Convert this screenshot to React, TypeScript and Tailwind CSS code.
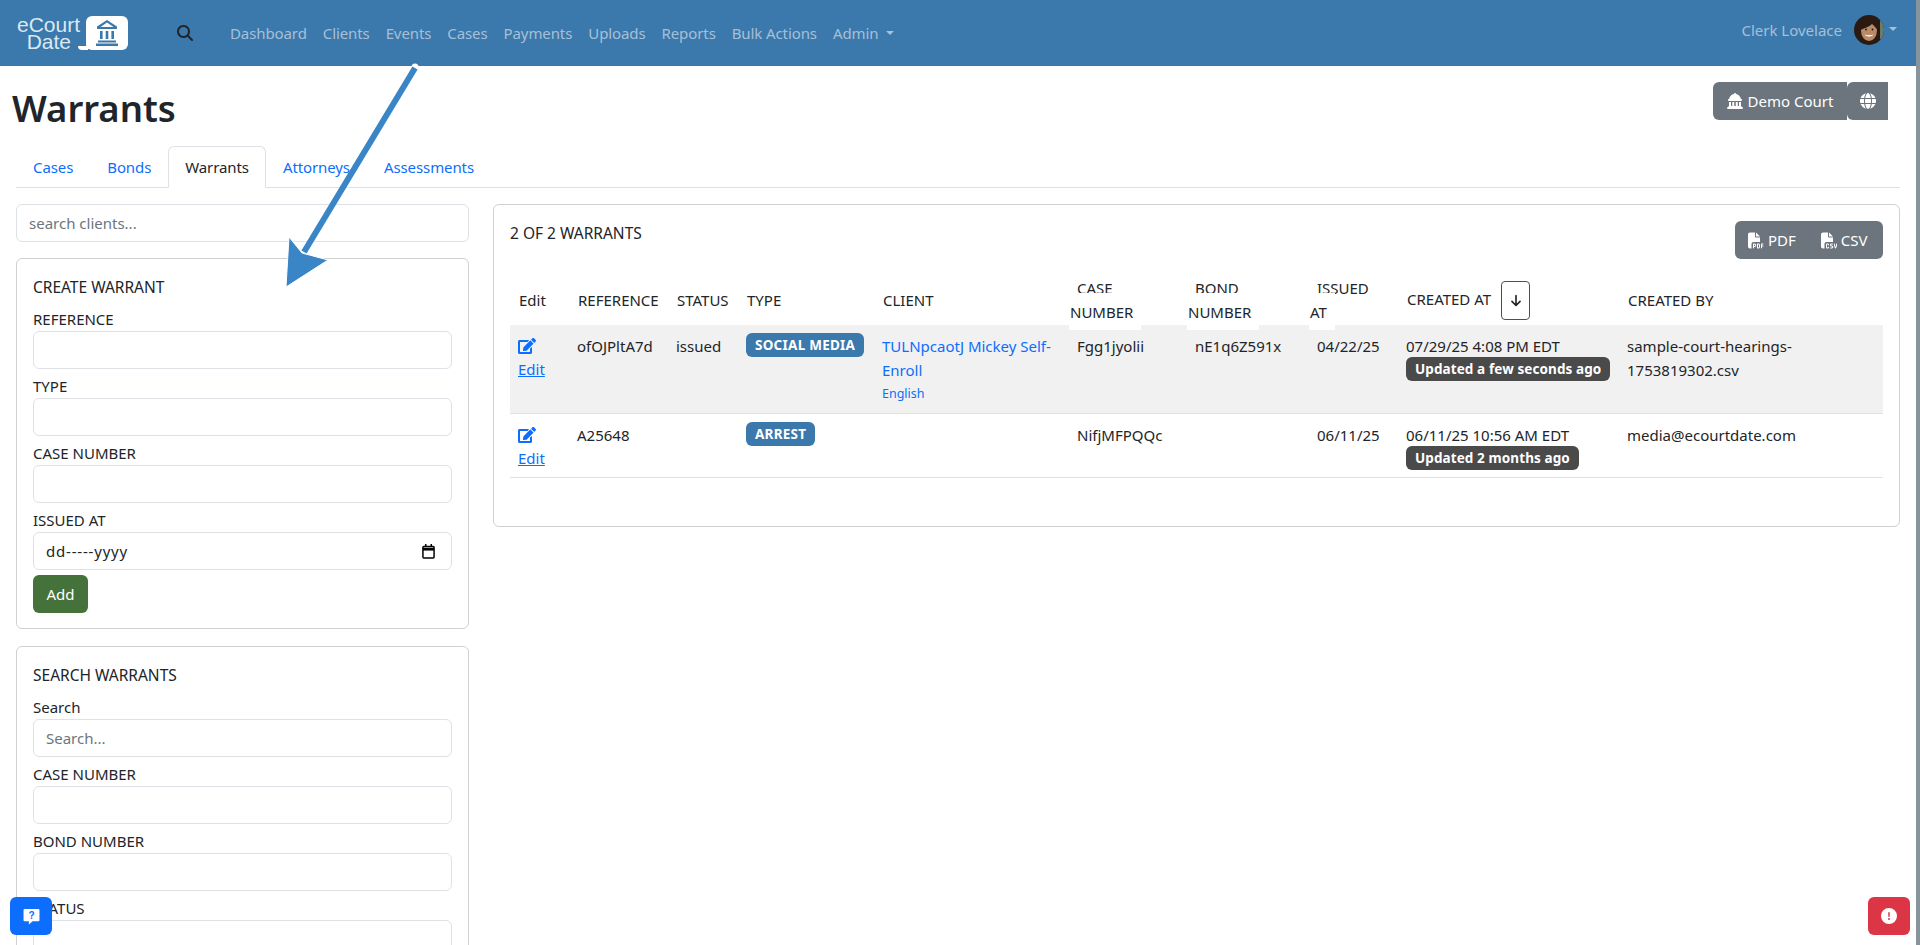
import React from "react";
import { FaEdit } from "react-icons/fa";
import { FaMagnifyingGlass, FaLandmarkDome, FaGlobe, FaFilePdf, FaFileCsv, FaCircleExclamation, FaArrowDown } from "react-icons/fa6";

const NAV = ["Dashboard", "Clients", "Events", "Cases", "Payments", "Uploads", "Reports", "Bulk Actions"];
const TABS = ["Cases", "Bonds", "Warrants", "Attorneys", "Assessments"];

function Caret() {
  return <span className="inline-block w-0 h-0 border-x-[4px] border-x-transparent border-t-[4px] border-t-current" />;
}

function Field({ label, placeholder }: { label: string; placeholder?: string }) {
  return (
    <div className="mb-[5px]">
      <div className="h-[24px] leading-[24px]">{label}</div>
      <input
        placeholder={placeholder}
        className="block w-full h-[38px] px-[12px] rounded-[6px] border border-[#dee2e6] bg-white placeholder:text-[#6c757d] outline-none"
      />
    </div>
  );
}

function Stacked({ a, b }: { a: string; b: string }) {
  return (
    <th className="p-0 font-normal text-left align-top">
      <div className="pl-[8px] h-[24px] leading-[24px]">{a}</div>
      <div className="relative z-10 -mt-[7px] -mb-[5px] w-fit bg-white pl-[1px] pr-[8px] pt-[7px] pb-[6px] leading-[24px]">{b}</div>
    </th>
  );
}

function Plain({ children }: { children: React.ReactNode }) {
  return <th className="p-0 pl-[9px] font-normal text-left align-middle">{children}</th>;
}

function EditCell() {
  return (
    <td className="align-top px-[8px] pt-[9px] pb-[7px]">
      <div className="h-[24px] flex items-center text-[#0d6efd]"><FaEdit className="w-[18px] h-[16px]" /></div>
      <a className="block h-[24px] -mt-[1px] leading-[24px] text-[#0d6efd] underline">Edit</a>
    </td>
  );
}

function Cell({ children }: { children?: React.ReactNode }) {
  return <td className="align-top px-[8px] pt-[9px] pb-[7px] leading-[24px]">{children}</td>;
}

function Badge({ bg, children }: { bg: string; children: React.ReactNode }) {
  return (
    <span className={`block w-fit h-[24px] leading-[24px] px-[9px] rounded-[6px] text-white text-[13.5px] font-bold whitespace-nowrap ${bg}`}>
      {children}
    </span>
  );
}

function Avatar() {
  return (
    <svg viewBox="0 0 30 30" className="w-[30px] h-[30px] rounded-full">
      <rect width="30" height="30" fill="#2a1a11" />
      <rect x="26" y="4" width="4" height="20" fill="#6d7a6a" />
      <ellipse cx="15" cy="15.500" rx="8" ry="10.500" fill="#b98a68" />
      <path d="M6.500 15C6.500 7 11 4.500 15 4.500c5 0 8.500 3 8.500 10-2-2-4-4.500-5.500-5.500-2.500 2.500-7 4-11.500 6Z" fill="#2a1a11" />
      <path d="M10.500 19.500c2 2.800 7 2.800 9 0-3 .8-6 .8-9 0Z" fill="#f5eee6" />
      <circle cx="12" cy="14.500" r="0.900" fill="#23140c" />
      <circle cx="18.500" cy="14.500" r="0.900" fill="#23140c" />
    </svg>
  );
}

function Courthouse() {
  return (
    <svg viewBox="0 0 22 26" className="w-[22px] h-[26px]" fill="#3b78ab">
      <path d="M11 0 21 6.500V9H1V6.500L11 0Zm0 2.600L4.500 7h13L11 2.600Z" fillRule="evenodd" />
      <rect x="4" y="11" width="2.600" height="8" />
      <rect x="9.700" y="11" width="2.600" height="8" />
      <rect x="15.400" y="11" width="2.600" height="8" />
      <rect x="2" y="20.500" width="18" height="2" />
      <rect x="0" y="23.500" width="22" height="2.500" />
    </svg>
  );
}

function Logo() {
  return (
    <div className="flex items-center ml-[16px] w-[112px] h-[34px] text-[#dce8f2]">
      <div className="w-[64px] flex flex-col items-end text-[21px] leading-[17px] font-['Liberation_Sans',sans-serif]">
        <span>eCourt</span>
        <span className="pr-[9px]">Date</span>
      </div>
      <div className="relative ml-[6px] w-[42px] h-[34px] rounded-[6px] bg-white flex items-center justify-center">
        <Courthouse />
        <span className="absolute -left-[8px] bottom-0 w-[10px] h-[4px] bg-white rounded-bl-[6px]" />
      </div>
    </div>
  );
}

export default function App() {
  return (
    <div className="relative flex w-[1920px] h-[945px] overflow-hidden bg-white text-[#212529] text-[15px] font-['Noto_Sans','Open_Sans',sans-serif]">
      <div className="w-[1916px] shrink-0">
        <header className="h-[66px] bg-[#3b78ab] flex items-center text-[rgba(255,255,255,0.55)]">
          <Logo />
          <FaMagnifyingGlass className="ml-[49px] w-[16px] h-[16px] text-[#212529]" />
          <nav className="ml-[37px] flex items-center gap-[16px] tracking-[-0.1px]">
            {NAV.map((n) => (
              <a key={n} className="leading-[24px]">{n}</a>
            ))}
            <a className="flex items-center gap-[8px] leading-[24px]">Admin <Caret /></a>
          </nav>
          <div className="ml-auto mr-[19px] -mt-[6px] flex items-center">
            <span>Clerk Lovelace</span>
            <span className="ml-[12px]"><Avatar /></span>
            <span className="ml-[5px] -mt-[2px] flex"><Caret /></span>
          </div>
        </header>

        <div className="h-[80px] pl-[12px] pr-[28px] pt-[16px] flex justify-between items-start">
          <h1 className="text-[36.5px] leading-[52px] font-semibold">Warrants</h1>
          <div className="flex text-white">
            <div className="h-[38px] w-[134px] rounded-l-[6px] bg-[#6c757d] flex items-center justify-center gap-[5px]">
              <FaLandmarkDome className="w-[16px] h-[16px]" /> Demo Court
            </div>
            <div className="h-[38px] w-[41px] rounded-l-[6px] bg-[#6c757d] flex items-center justify-center">
              <FaGlobe className="w-[16px] h-[16px]" />
            </div>
          </div>
        </div>

        <div className="mx-[16px] h-[42px] border-b border-[#dee2e6] flex tracking-[-0.1px]">
          {TABS.map((t) =>
            t === "Warrants" ? (
              <a key={t} className="h-[42px] px-[16px] flex items-center bg-white border border-[#dee2e6] border-b-white rounded-t-[6px]">{t}</a>
            ) : (
              <a key={t} className="h-[42px] px-[17px] flex items-center text-[#0d6efd]">{t}</a>
            )
          )}
        </div>

        <div className="mt-[16px] mx-[16px] flex items-start gap-[24px]">
          <aside className="w-[453px] shrink-0">
            <input
              placeholder="search clients..."
              className="block w-full h-[38px] px-[12px] rounded-[6px] border border-[#dee2e6] placeholder:text-[#6c757d] outline-none mb-[16px]"
            />
            <section className="rounded-[6px] border border-[#ced1d4] px-[16px] pt-[16px] pb-[15px] mb-[17px]">
              <div className="h-[24px] leading-[24px] mb-[8px] text-[15.500px]">CREATE WARRANT</div>
              <Field label="REFERENCE" />
              <Field label="TYPE" />
              <Field label="CASE NUMBER" />
              <div className="mb-[5px]">
                <div className="h-[24px] leading-[24px]">ISSUED AT</div>
                <div className="h-[38px] px-[12px] rounded-[6px] border border-[#dee2e6] flex items-center justify-between">
                  <span className="tracking-[0.8px]">dd-----yyyy</span>
                  <svg viewBox="0 0 14 16" className="w-[13px] h-[15px] mr-[4px]" fill="none" stroke="#000" strokeWidth="1.600">
                    <rect x="1" y="2.500" width="12" height="12.500" rx="1" />
                    <path d="M1 5.500h12" strokeWidth="3" />
                    <path d="M4 0v3M10 0v3" />
                  </svg>
                </div>
              </div>
              <button className="h-[38px] w-[55px] rounded-[6px] bg-[#44723a] text-white">Add</button>
            </section>
            <section className="rounded-[6px] border border-[#ced1d4] px-[16px] pt-[16px] pb-[16px]">
              <div className="h-[24px] leading-[24px] mb-[8px] text-[15.500px]">SEARCH WARRANTS</div>
              <Field label="Search" placeholder="Search..." />
              <Field label="CASE NUMBER" />
              <Field label="BOND NUMBER" />
              <Field label="STATUS" />
            </section>
          </aside>

          <main className="flex-1 rounded-[6px] border border-[#ced1d4] px-[16px] pt-[16px] pb-[48px]">
            <div className="flex justify-between items-start mb-[17px]">
              <div className="h-[24px] leading-[24px] text-[15.500px]">2 OF 2 WARRANTS</div>
              <div className="h-[38px] w-[148px] rounded-[6px] bg-[#6c757d] text-white flex items-center gap-[25px] pl-[13px]">
                <span className="flex items-center gap-[4px]"><FaFilePdf className="w-[16px] h-[17px]" /> PDF</span>
                <span className="flex items-center gap-[4px]"><FaFileCsv className="w-[16px] h-[17px]" /> CSV</span>
              </div>
            </div>
            <table className="w-[1373px] table-fixed border-collapse">
              <colgroup>
                <col className="w-[59px]" />
                <col className="w-[99px]" />
                <col className="w-[70px]" />
                <col className="w-[136px]" />
                <col className="w-[195px]" />
                <col className="w-[118px]" />
                <col className="w-[122px]" />
                <col className="w-[89px]" />
                <col className="w-[221px]" />
                <col className="w-[264px]" />
              </colgroup>
              <thead>
                <tr className="h-[49px]">
                  <Plain>Edit</Plain>
                  <Plain>REFERENCE</Plain>
                  <Plain>STATUS</Plain>
                  <Plain>TYPE</Plain>
                  <Plain>CLIENT</Plain>
                  <Stacked a="CASE" b="NUMBER" />
                  <Stacked a="BOND" b="NUMBER" />
                  <Stacked a="ISSUED" b="AT" />
                  <th className="p-0 pl-[9px] font-normal text-left align-top">
                    <div className="flex items-center h-[44px] gap-[10px] pt-[5px]">
                      <span className="-mt-[3px]">CREATED AT</span>
                      <span className="w-[29px] h-[39px] rounded-[4px] border border-[#495057] flex items-center justify-center">
                        <FaArrowDown className="w-[12px] h-[13px]" />
                      </span>
                    </div>
                  </th>
                  <Plain>CREATED BY</Plain>
                </tr>
              </thead>
              <tbody>
                <tr className="bg-[#f1f1f1] border-b border-[#dee2e6]">
                  <EditCell />
                  <Cell>ofOJPltA7d</Cell>
                  <Cell>issued</Cell>
                  <Cell><div className="-mt-[1px] tracking-[0.25px]"><Badge bg="bg-[#3b78ab]">SOCIAL MEDIA</Badge></div></Cell>
                  <Cell>
                    <a className="text-[#0d6efd]">TULNpcaotJ Mickey Self-<br />Enroll</a>
                    <div className="text-[#0d6efd] text-[12.500px] leading-[24px]">English</div>
                  </Cell>
                  <Cell>Fgg1jyolii</Cell>
                  <Cell>nE1q6Z591x</Cell>
                  <Cell>04/22/25</Cell>
                  <Cell>
                    07/29/25 4:08 PM EDT
                    <div className="-mt-[1px] tracking-[0.1px]"><Badge bg="bg-[#4a4a4a]">Updated a few seconds ago</Badge></div>
                  </Cell>
                  <Cell>sample-court-hearings-<br />1753819302.csv</Cell>
                </tr>
                <tr className="border-b border-[#dee2e6]">
                  <EditCell />
                  <Cell>A25648</Cell>
                  <Cell />
                  <Cell><div className="-mt-[1px] tracking-[0.25px]"><Badge bg="bg-[#3b78ab]">ARREST</Badge></div></Cell>
                  <Cell />
                  <Cell>NifjMFPQQc</Cell>
                  <Cell />
                  <Cell>06/11/25</Cell>
                  <Cell>
                    06/11/25 10:56 AM EDT
                    <div className="-mt-[1px] tracking-[0.1px]"><Badge bg="bg-[#4a4a4a]">Updated 2 months ago</Badge></div>
                  </Cell>
                  <Cell>media@ecourtdate.com</Cell>
                </tr>
              </tbody>
            </table>
          </main>
        </div>
      </div>
      <div className="w-[4px] bg-[#87949b]" />

      <svg viewBox="0 0 1920 945" className="absolute inset-0 w-[1920px] h-[945px] pointer-events-none">
        <circle cx="415" cy="67" r="3.500" fill="#fff" />
        <path d="M415 68 304 252" stroke="#3a85c5" strokeWidth="6" />
        <path d="M289 237 302 253 328 260 286 287Z" fill="#3a85c5" stroke="#fff" strokeWidth="1" />
      </svg>

      <button className="absolute left-[10px] top-[897px] w-[42px] h-[38px] rounded-[6px] bg-[#0d6efd] flex items-center justify-center">
        <svg viewBox="0 0 16 16" className="w-[17px] h-[17px]">
          <path d="M1.500 1h13a1 1 0 0 1 1 1v9.500a1 1 0 0 1-1 1H9L5.500 15.500V12.500H1.500a1 1 0 0 1-1-1V2a1 1 0 0 1 1-1Z" fill="#fff" />
          <text x="8" y="10" textAnchor="middle" fontSize="9.500" fontWeight="700" fill="#0d6efd" fontFamily="Liberation Sans">?</text>
        </svg>
      </button>
      <button className="absolute left-[1868px] top-[897px] w-[42px] h-[38px] rounded-[6px] bg-[#dc3545] flex items-center justify-center text-white">
        <FaCircleExclamation className="w-[16px] h-[16px]" />
      </button>
    </div>
  );
}
